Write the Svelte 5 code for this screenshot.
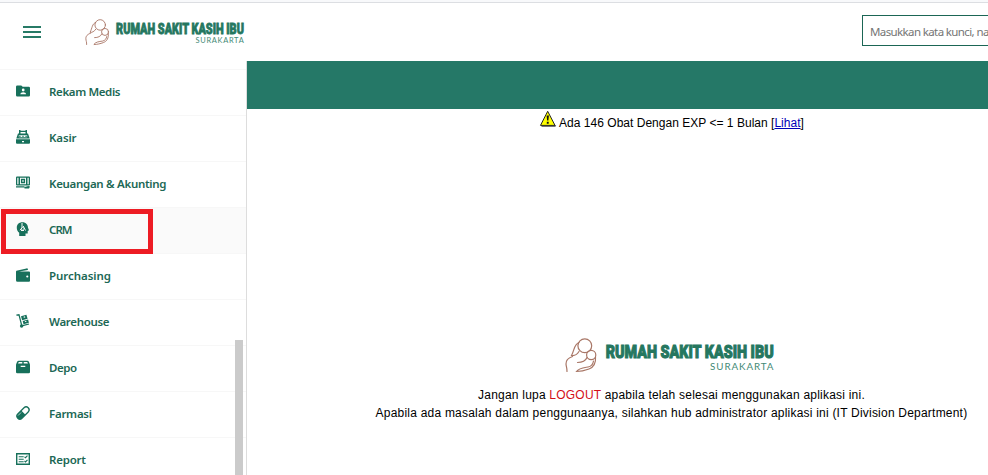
<script>
  const items = [
    { label: 'Rekam Medis', icon: 'folder', width: 71.5 },
    { label: 'Kasir', icon: 'register', width: 27.5 },
    { label: 'Keuangan & Akunting', icon: 'money', width: 117.5 },
    { label: 'CRM', icon: 'crm', width: 23.5, active: true },
    { label: 'Purchasing', icon: 'wallet', width: 62 },
    { label: 'Warehouse', icon: 'trolley', width: 60.5 },
    { label: 'Depo', icon: 'box', width: 28 },
    { label: 'Farmasi', icon: 'pill', width: 43 },
    { label: 'Report', icon: 'report', width: 37 }
  ];
</script>

{#snippet logo(cls)}
  <svg class={cls} viewBox="0 0 210 36" aria-label="Rumah Sakit Kasih Ibu Surakarta">
    <g fill="none" stroke="#a97767" stroke-width="1.2" stroke-linecap="round">
      <circle cx="19.8" cy="7.8" r="6.9" />
      <circle cx="26.2" cy="17" r="4.6" />
      <path d="M14 4.500C9 6 9.500 12 6.500 17.500C9 18 12 16.500 14 13.500" />
      <path d="M7.500 18.500C3 20 .8 22.500 1 26C1.200 29 2.200 30 2 33.500" />
      <path d="M22 19.500C20.500 23 17 24.500 12.500 24.500M30.500 19C31 25 29 29 24 31C20 32.500 16 33.500 11.500 33.500C14 30 18 29.800 23 29C26 28.500 28 26 28.500 23" />
    </g>
    <text class="name" x="40.700" y="19.800" textLength="168" lengthAdjust="spacingAndGlyphs">RUMAH SAKIT KASIH IBU</text>
    <text class="city" x="145" y="32.200" textLength="63.500">SURAKARTA</text>
  </svg>
{/snippet}

{#snippet icon(name)}
  <svg class="icon" viewBox="0 0 14 14" fill="#17705b">
    {#if name === 'folder'}
      <path d="M1.300 1.500H5.300L6.700 2.800H12.700Q14 2.800 14 4V11.300Q14 12.500 12.700 12.500H1.300Q0 12.500 0 11.300V2.800Q0 1.500 1.300 1.500Z" />
      <g fill="#fff"><circle cx="7.200" cy="6" r="1.400" /><path d="M4.300 10.300C4.300 7.500 10.100 7.500 10.100 10.300Z" /></g>
    {:else if name === 'register'}
      <path fill-rule="evenodd" d="M3 0H4.500V.8H9.500V0H11V3.500H12L13.700 8.500H.3L2 3.500H3ZM4.500 2V3.500H9.500V2ZM2.800 5.200V7.300H11.200V5.200Z" />
      <path d="M3.300 5.700H4.500V6.900H3.300ZM6.400 5.700H7.600V6.900H6.400ZM9.500 5.700H10.700V6.900H9.500Z" />
      <path fill-rule="evenodd" d="M0 9.300H14V12.800Q14 13.800 13 13.800H1Q0 13.800 0 12.800ZM6 11V12.200H8V11Z" />
    {:else if name === 'money'}
      <path fill-rule="evenodd" d="M1 .5H13Q14 .5 14 1.500V8.500Q14 9.500 13 9.500H1Q0 9.500 0 8.500V1.500Q0 .5 1 .5ZM1.300 1.800V8.200H2.500V1.800ZM4 1.800V8.200H10V1.800ZM11.500 1.800V8.200H12.700V1.800Z" />
      <path fill-rule="evenodd" d="M4.900 2.700H9.100V7.300H4.900ZM6.300 4.200V5.800H7.700V4.200Z" />
      <path d="M0 10.200H8.500V11.400H0ZM8.500 10.900L12.300 10L14 10.500L13 12.400H8.500Z" />
    {:else if name === 'crm'}
      <path d="M6.300 .3C10 .2 12 2.800 12 5.800L13 8.300L11.700 9V11.500H9.500V14H3.200V10.800C1.500 9.600 .8 7.800 .8 5.800C.8 2.500 3 .3 6.300 .3Z" />
      <path d="M6 1V5.800L4 8.200M7.200 4L9.500 8.500M5 8.500H8" fill="none" stroke="#fafafa" stroke-width="1" />
      <circle cx="6.700" cy="6.800" r="1.300" fill="none" stroke="#fafafa" stroke-width=".7" />
    {:else if name === 'wallet'}
      <path d="M.4 2.700L10.500 .4Q11.900 .2 11.900 1.400V1.900L3 3.500H13Q14 3.500 14 4.500V12.800Q14 13.800 13 13.800H1.500Q0 13.800 0 12.300V4Q0 3 .4 2.700Z" />
      <circle cx="11.300" cy="8.500" r="1.100" fill="#fff" />
    {:else if name === 'trolley'}
      <path d="M.4 1.200L3 .8L5.600 11M6.700 11.700L13 10" fill="none" stroke="#17705b" stroke-width="1.200" />
      <circle cx="5.600" cy="12" r="1.700" />
      <path d="M5 2.200L10.400 .8L11.600 4.700L6.100 6.200ZM6.700 6.900L12.100 5.500L12.900 8.800L7.500 10.300Z" />
      <path d="M7.500 2.700L9 2.300L9.300 3.400L7.800 3.800ZM8.800 7.200L10.300 6.800L10.500 7.700L9 8.100Z" fill="#fff" />
    {:else if name === 'box'}
      <path d="M2.800 .8H11.200Q12.500 .8 13 2L14 4.500V12Q14 13.300 12.700 13.300H1.300Q0 13.300 0 12V4.500L1 2Q1.500 .8 2.800 .8Z" />
      <path d="M2.800 2H6.300V3.500H2ZM7.700 2H11.200L12 3.500H7.700ZM4.700 5.700H9.300V7H4.700Z" fill="#fff" />
    {:else if name === 'pill'}
      <g transform="rotate(-45 7 7)"><rect x="-1" y="3.400" width="16" height="7.200" rx="3.600" /><path d="M7.500 4.700H11.400A2.300 2.300 0 0 1 11.400 9.300H7.500Z" fill="#fff" /><path d="M1.700 5.300H6" stroke="#fff" stroke-width=".6" /></g>
    {:else}
      <path fill-rule="evenodd" d="M0 1H14V13H0ZM1.400 2.400V11.600H12.600V2.400Z" />
      <path d="M2.700 4.700H7.700M2.700 7.200H7.700M2.700 9.700H7.700M8.500 4.900L9.500 5.700L11.500 3.700M8.500 9L9.500 9.900L11.500 7.800" fill="none" stroke="#17705b" stroke-width="1.100" />
    {/if}
  </svg>
{/snippet}

<div class="app">
  <header>
    <button class="menu" aria-label="Menu"><i></i><i></i><i></i></button>
    {@render logo('logo-small')}
    <div class="search">Masukkan kata kunci, nama</div>
  </header>
  <div class="body">
    <nav>
      <div class="stub"></div>
      {#each items as item}
        <div class="item" class:active={item.active}>
          {@render icon(item.icon)}
          <svg class="label" width="130" height="20"><text x="0" y="14" textLength={item.width}>{item.label}</text></svg>
        </div>
      {/each}
      <div class="thumb"></div>
      <div class="marker"></div>
    </nav>
    <main>
      <div class="banner"></div>
      <p class="alert">
        <svg class="warn" viewBox="0 0 16 16"><path d="M1.500 15.500H15.300L15.700 14" fill="none" stroke="#777" /><path d="M7.700 .3L15 14.400H.5Z" fill="#ff0" stroke="#222" stroke-width="1" stroke-linejoin="round" /><path d="M6.600 4.500H8.900L8.400 9.500H7.100ZM6.800 10.800H8.700V12.700H6.800Z" fill="#111" /></svg>
        <span>Ada 146 Obat Dengan EXP &lt;= 1 Bulan [<a href="#lihat">Lihat</a>]</span>
      </p>
      <section>
        {@render logo('logo-large')}
        <p>Jangan lupa <em>LOGOUT</em> apabila telah selesai menggunakan aplikasi ini.</p>
        <p>Apabila ada masalah dalam penggunaanya, silahkan hub administrator aplikasi ini (IT Division Department)</p>
      </section>
    </main>
  </div>
</div>

<style>
  :global(body) { margin: 0; overflow: hidden; }
  .app { width: 988px; height: 475px; overflow: hidden; background: #fff; display: flex; flex-direction: column; font-family: "Liberation Sans", Arial, sans-serif; font-size: 12px; color: #000; }
  header { height: 61px; flex: none; box-sizing: border-box; display: flex; align-items: flex-start; background: linear-gradient(#f8f9fb 0 2px, #dcdee2 2px 3px, #fff 3px); }
  .menu { border: 0; padding: 0; margin: 26px 0 0 23px; background: none; width: 18px; flex: none; display: flex; flex-direction: column; gap: 3px; }
  .menu i { height: 2px; background: #277a66; }
  svg { flex: none; overflow: visible; }
  .logo-small { width: 160px; height: 27.400px; margin: 19px 0 0 43.500px; }
  .logo-large { width: 210px; height: 36px; display: block; margin-right: 4px; }
  .name { font: 900 19.200px Roboto, sans-serif; fill: #25775f; stroke: #25775f; stroke-width: 1.1; }
  .city { font: 400 9.800px Lato, sans-serif; fill: #438a76; }
  .search { box-sizing: border-box; width: 180px; height: 31px; flex: none; margin: 15px 0 0 617.500px; border: 1px solid #1b6655; padding-left: 7px; line-height: 31px; font-family: "Noto Sans", sans-serif; font-size: 11.500px; letter-spacing: -.62px; color: #757575; white-space: nowrap; }
  .body { flex: 1; display: flex; min-height: 0; }
  nav { position: relative; width: 247px; flex: none; box-sizing: border-box; border-right: 1px solid #ddd; overflow: hidden; }
  .stub { height: 9px; box-sizing: border-box; border-bottom: 1px solid #f7f7f7; }
  .item { height: 46px; box-sizing: border-box; border-bottom: 1px solid #f7f7f7; display: flex; align-items: flex-start; padding-left: 16px; }
  .active { background: #fafafa; }
  .icon { width: 14px; height: 14px; margin-top: 14px; }
  .label { margin: 12px 0 0 19.200px; font: 600 11.500px "Noto Sans", sans-serif; fill: #1c6855; }
  .thumb { position: absolute; left: 235px; top: 279px; width: 8px; height: 140px; background: #cbcbcb; }
  .marker { position: absolute; left: 1px; top: 148px; width: 152px; height: 45px; box-sizing: border-box; border: 5px solid #ed1c24; }
  main { flex: 1; min-width: 0; display: flex; flex-direction: column; }
  .banner { height: 48px; background: #257867; }
  p { margin: 0; white-space: nowrap; }
  .alert { display: flex; justify-content: center; gap: 3px; height: 28px; margin-left: 108px; width: 634px; }
  .alert span { line-height: 28px; letter-spacing: .02px; }
  .warn { width: 16px; height: 16px; margin-top: 2px; }
  a { color: #0000b8; text-decoration: underline; }
  section { margin-top: 201px; display: flex; flex-direction: column; align-items: center; padding-left: 108px; }
  section p { line-height: 18px; letter-spacing: .215px; }
  .logo-large + p { margin-top: 12px; }
  em { font-style: normal; color: #d40f17; }
</style>
